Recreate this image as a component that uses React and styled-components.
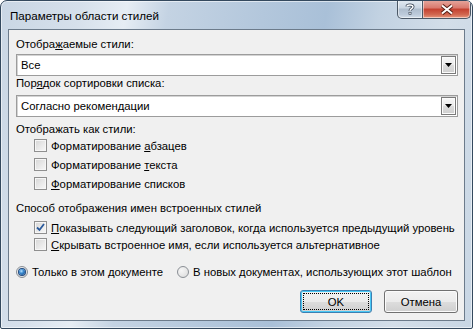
import React from "react";
import styled, { createGlobalStyle } from "styled-components";

const Global = createGlobalStyle`
  html, body { margin: 0; padding: 0; background: #ffffff; }
  body { font-family: "Liberation Sans", Arial, sans-serif; }
`;

const Window = styled.div`
  width: 473px;
  height: 329px;
  box-sizing: border-box;
  display: flex;
  flex-direction: column;
  border: 1px solid #34495e;
  border-radius: 7px 7px 2px 2px;
  background:
    linear-gradient(100deg,
      #c9d6e4 0%, #d6e0eb 15%, #e6edf4 24%, #c4d3e3 32%,
      #b3c7dc 50%, #a9c0d8 62%, #c2d2e2 72%, #d3dee9 85%, #c8d6e4 100%);
  box-shadow: inset 0 0 0 1px rgba(255,255,255,0.55);
  overflow: hidden;
`;

const TitleBar = styled.div`
  height: 28px;
  display: flex;
  align-items: flex-start;
  padding-left: 9px;
  padding-right: 1px;
`;

const Title = styled.div`
  flex: 1;
  font-size: 11.6px;
  line-height: 14px;
  margin-top: 8px;
  color: #000;
`;

const CaptionButtons = styled.div`
  display: flex;
  margin-top: -1px;
`;

const CaptionButton = styled.div`
  width: ${(p) => p.$w}px;
  height: 19px;
  box-sizing: border-box;
  border: 1px solid #4b5866;
  border-top: none;
  display: flex;
  align-items: center;
  justify-content: center;
  border-radius: ${(p) => (p.$close ? "0 0 5px 0" : "0 0 0 5px")};
  border-left: ${(p) => (p.$close ? "none" : "1px solid #4b5866")};
  background: ${(p) =>
    p.$close
      ? "linear-gradient(180deg, #e6a99f 0%, #d9786c 45%, #c4402f 50%, #d1664f 80%, #e8977d 100%)"
      : "linear-gradient(180deg, #e4ebf2 0%, #c9d5e2 45%, #aebdcd 50%, #bccada 80%, #d2dde8 100%)"};
  box-shadow: inset 0 0 0 1px rgba(255,255,255,0.5);
`;

const Client = styled.div`
  flex: 1;
  margin: 0 7px 7px 7px;
  border: 1px solid #6c7b8b;
  background: #f0f0f0;
  padding: 7px 6px 0 7px;
  display: flex;
  flex-direction: column;
  font-size: 11.3px;
  color: #000;
`;

const Label = styled.div`
  line-height: ${(p) => p.$lh || 14}px;
  margin-top: ${(p) => p.$mt || 0}px;
  margin-bottom: ${(p) => p.$mb || 0}px;
  white-space: nowrap;
`;

const U = styled.span`
  text-decoration: underline;
  text-underline-offset: 1px;
`;

const Combo = styled.div`
  height: 22px;
  box-sizing: border-box;
  border: 1px solid #9c9c9c;
  box-shadow: inset 1px 1px 0 #d4d4d4;
  background: #fff;
  display: flex;
  align-items: center;
  padding: 0 1px 0 4px;
`;

const ComboText = styled.div`
  flex: 1;
  line-height: 14px;
`;

const DropButton = styled.div`
  width: 15px;
  height: 18px;
  box-sizing: border-box;
  border: 1px solid #7a7a7a;
  background: linear-gradient(180deg, #f7f7f7 0%, #ebebeb 50%, #dcdcdc 51%, #cfcfcf 100%);
  box-shadow: inset 0 0 0 1px #fbfbfb;
  display: flex;
  align-items: center;
  justify-content: center;
`;

const CheckRow = styled.div`
  height: ${(p) => p.$h}px;
  display: flex;
  align-items: center;
  padding-left: 18px;
  gap: 4px;
  white-space: nowrap;
`;

const Box = styled.div`
  width: 13px;
  height: 13px;
  box-sizing: border-box;
  border: 1px solid #8f8f8f;
  background: linear-gradient(135deg, #d6d6d6 0%, #ebebeb 60%, #f8f8f8 100%);
  box-shadow: inset 0 0 0 1px #f6f6f6;
  display: flex;
  align-items: center;
  justify-content: center;
`;

const RadioRow = styled.div`
  height: 14px;
  margin-top: 12px;
  display: flex;
  align-items: center;
  white-space: nowrap;
`;

const RadioItem = styled.div`
  display: flex;
  align-items: center;
  gap: 4px;
  margin-right: 14px;
`;

const Radio = styled.div`
  width: 12px;
  height: 12px;
  box-sizing: border-box;
  border-radius: 50%;
  border: 1px solid #8a8f95;
  background: radial-gradient(circle at 35% 35%, #f6f6f6 0%, #dadada 100%);
  display: flex;
  align-items: center;
  justify-content: center;
`;

const Dot = styled.div`
  width: 6px;
  height: 6px;
  border-radius: 50%;
  background: radial-gradient(circle at 40% 35%, #b9e3ff 0%, #3a8ad0 40%, #0d3f7d 100%);
  box-shadow: 0 0 0 1px #204a80;
`;

const ButtonRow = styled.div`
  margin-top: 11px;
  display: flex;
  justify-content: flex-end;
  gap: 12px;
`;

const Button = styled.div`
  width: ${(p) => p.$w}px;
  height: 23px;
  box-sizing: border-box;
  border-radius: 3px;
  border: 1px solid ${(p) => (p.$default ? "#3c7fb1" : "#707070")};
  background: linear-gradient(180deg, #f2f2f2 0%, #ebebeb 50%, #dddddd 51%, #cfcfcf 100%);
  box-shadow: inset 0 0 0 1px ${(p) => (p.$default ? "#48c8f5" : "#fbfbfb")};
  display: flex;
  align-items: center;
  justify-content: center;
  padding: 2px;
`;

const Focus = styled.div`
  flex: 1;
  align-self: stretch;
  border: 1px dotted ${(p) => (p.$on ? "#000" : "transparent")};
  display: flex;
  align-items: center;
  justify-content: center;
  line-height: 14px;
`;

const Arrow = () => (
  <svg width="7" height="4" viewBox="0 0 7 4">
    <path d="M0 0H7L3.5 4Z" fill="#000" />
  </svg>
);

const Check = () => (
  <svg width="9" height="9" viewBox="0 0 9 9">
    <path d="M1 4.5L3.5 7L8 1" fill="none" stroke="#2a5a9c" strokeWidth="1.8" />
  </svg>
);

const Help = () => (
  <svg width="10" height="12" viewBox="0 0 10 12">
    <path
      d="M2 3.5C2 1.5 8 1.2 8 3.8C8 5.6 5 5.6 5 7.8"
      fill="none"
      stroke="#3a4656"
      strokeWidth="3"
    />
    <path
      d="M2 3.5C2 1.5 8 1.2 8 3.8C8 5.6 5 5.6 5 7.8"
      fill="none"
      stroke="#fff"
      strokeWidth="1.4"
    />
    <rect x="3.6" y="9" width="2.8" height="2.6" fill="#3a4656" />
    <rect x="4.3" y="9.6" width="1.4" height="1.4" fill="#fff" />
  </svg>
);

const Close = () => (
  <svg width="14" height="11" viewBox="0 0 14 11">
    <path d="M2 1.5L12 9.5M12 1.5L2 9.5" stroke="#5a2218" strokeWidth="4" />
    <path d="M2 1.5L12 9.5M12 1.5L2 9.5" stroke="#fff" strokeWidth="2" />
  </svg>
);

export default function App() {
  return (
    <>
      <Global />
      <Window>
        <TitleBar>
          <Title>Параметры области стилей</Title>
          <CaptionButtons>
            <CaptionButton $w={26}>
              <Help />
            </CaptionButton>
            <CaptionButton $w={48} $close>
              <Close />
            </CaptionButton>
          </CaptionButtons>
        </TitleBar>
        <Client>
          <Label $mb={3}>
            Отобра<U>ж</U>аемые стили:
          </Label>
          <Combo>
            <ComboText>Все</ComboText>
            <DropButton>
              <Arrow />
            </DropButton>
          </Combo>
          <Label $mb={5}>
            Пор<U>я</U>док сортировки списка:
          </Label>
          <Combo>
            <ComboText>Согласно рекомендации</ComboText>
            <DropButton>
              <Arrow />
            </DropButton>
          </Combo>
          <Label $mt={6} $lh={13}>
            Отображать как стили:
          </Label>
          <CheckRow $h={19}>
            <Box />
            <span>
              Форматирование <U>а</U>бзацев
            </span>
          </CheckRow>
          <CheckRow $h={19}>
            <Box />
            <span>
              Форматирование <U>т</U>екста
            </span>
          </CheckRow>
          <CheckRow $h={19}>
            <Box />
            <span>
              <U>Ф</U>орматирование списков
            </span>
          </CheckRow>
          <Label $mt={8} $mb={4}>
            Способ отображения имен встроенных стилей
          </Label>
          <CheckRow $h={17}>
            <Box>
              <Check />
            </Box>
            <span>
              <U>П</U>оказывать следующий заголовок, когда используется предыдущий уровень
            </span>
          </CheckRow>
          <CheckRow $h={17}>
            <Box />
            <span>
              <U>С</U>крывать встроенное имя, если используется альтернативное
            </span>
          </CheckRow>
          <RadioRow>
            <RadioItem>
              <Radio>
                <Dot />
              </Radio>
              <span>Только в этом документе</span>
            </RadioItem>
            <RadioItem>
              <Radio />
              <span>В новых документах, использующих этот шаблон</span>
            </RadioItem>
          </RadioRow>
          <ButtonRow>
            <Button $w={72} $default>
              <Focus $on>OK</Focus>
            </Button>
            <Button $w={74}>
              <Focus>Отмена</Focus>
            </Button>
          </ButtonRow>
        </Client>
      </Window>
    </>
  );
}
